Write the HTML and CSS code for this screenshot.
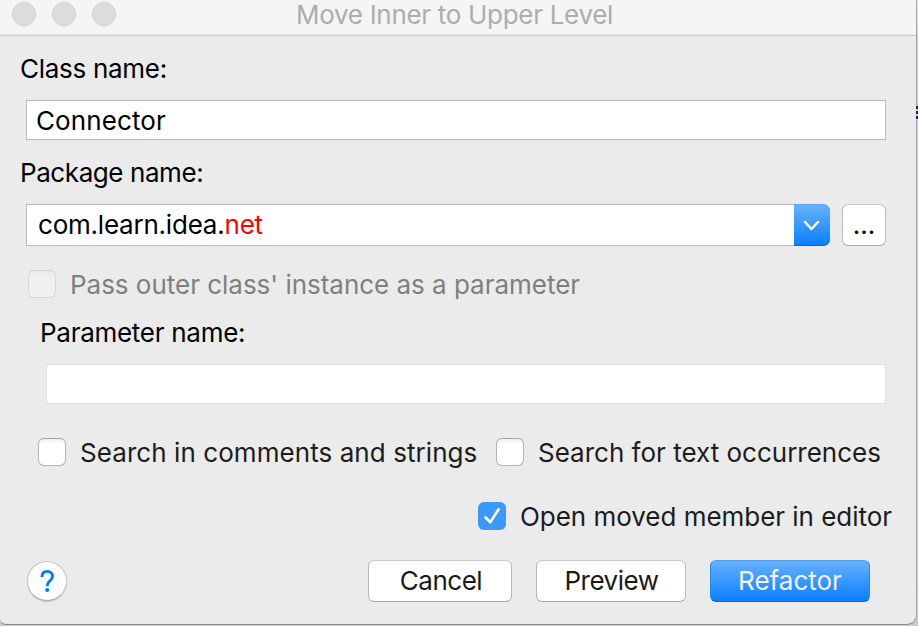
FILE: index.html
```html
<!DOCTYPE html>
<html lang="en">
<head>
<meta charset="utf-8">
<title>Move Inner to Upper Level</title>
<link rel="stylesheet" href="styles.css">
</head>
<body>
<div class="dialog">
  <header class="titlebar">
    <div class="lights"><i></i><i></i><i></i></div>
    <h1>Move Inner to Upper Level</h1>
  </header>
  <main class="form">
    <label class="label">Class name:</label>
    <div class="field">Connector</div>
    <label class="label label-package">Package name:</label>
    <div class="package-row">
      <div class="combo">
        <div class="combo-text">com.learn.idea.<span class="unresolved">net</span></div>
        <div class="combo-arrow"><svg width="36" height="42" viewBox="0 0 36 42"><path d="M11 18l6.500 7 6.500-7" fill="none" stroke="#fff" stroke-width="2.500" stroke-linecap="round" stroke-linejoin="round"/></svg></div>
      </div>
      <div class="button browse">...</div>
    </div>
    <div class="check-row pass-row"><i class="box disabled"></i><span>Pass outer class' instance as a parameter</span></div>
    <label class="label label-param">Parameter name:</label>
    <div class="field field-param"></div>
    <div class="search-row">
      <div class="check-row comments"><i class="box"></i><span>Search in comments and strings</span></div>
      <div class="check-row"><i class="box"></i><span>Search for text occurrences</span></div>
    </div>
    <div class="check-row open-row">
      <i class="box checked"><svg width="28" height="28" viewBox="0 0 28 28"><path d="M7.500 15.500l4.800 4.800L20.500 7.500" transform="translate(0 1)" fill="none" stroke="#2879d8" stroke-opacity=".5" stroke-width="3" stroke-linecap="round"/><path d="M7.500 15.500l4.800 4.800L20.500 7.500" fill="none" stroke="#fff" stroke-width="2.800" stroke-linecap="round" stroke-linejoin="round"/></svg></i>
      <span>Open moved member in editor</span>
    </div>
    <footer class="actions">
      <div class="help"><svg width="38" height="38" viewBox="0 0 38 38"><path d="M14 15C14 11.300 16.200 9.400 19.200 9.400c3.200 0 5.300 2 5.300 4.800 0 2.300-1.200 3.600-2.900 5-1.700 1.300-2.300 2.100-2.300 4.200v.8" fill="none" stroke="#007aff" stroke-width="2.900"/><circle cx="19.200" cy="28" r="2.100" fill="#007aff"/></svg></div>
      <div class="button cancel">Cancel</div>
      <div class="button preview">Preview</div>
      <div class="button primary">Refactor</div>
    </footer>
  </main>
</div>
<div class="backdrop"><i class="glyph"></i><i class="rule"></i><i class="rule rule-low"></i></div>
</body>
</html>
```
FILE: styles.css
```css
* { box-sizing: border-box; }
body {
  margin: 0;
  width: 918px;
  height: 626px;
  overflow: hidden;
  display: flex;
  background: #c9c9c9;
  color: #000;
  font: 26px/30px Inter, "Liberation Sans", sans-serif;
  white-space: nowrap;
}
i { display: block; }
.dialog {
  width: 917px;
  height: 625px;
  flex: none;
  background: #ebebeb;
  border-right: 1px solid #a6a6a6;
  border-bottom: 1px solid #8c8c8c;
  border-radius: 0 0 10px 6px;
}
.titlebar {
  position: relative;
  height: 36px;
  background: #f5f5f5;
  border-bottom: 1px solid #cbcbcb;
  box-shadow: inset 0 -1px #e9e9e9;
}
.lights { position: absolute; left: 12px; top: 2px; display: flex; gap: 16px; }
.lights i { width: 24px; height: 24px; border-radius: 50%; background: #dcdcdc; border: 1px solid #cecece; }
h1 { margin: 0; padding-left: 296px; font: inherit; letter-spacing: -.3px; color: #adadad; }
.form { padding: 17px 0 0 20px; }
.label { display: block; height: 32px; line-height: 32px; letter-spacing: -.28px; }
.field {
  width: 860px;
  height: 40px;
  margin: 15px 0 0 6px;
  padding-left: 9px;
  border: 1px solid #b9b9b9;
  background: #fff;
  line-height: 40px;
  letter-spacing: .1px;
}
.label-package { margin-top: 17px; letter-spacing: -.42px; }
.package-row { display: flex; gap: 12px; margin: 15px 0 0 6px; }
.combo { display: flex; width: 804px; height: 42px; }
.combo-text {
  flex: 1;
  border: 1px solid #b9b9b9;
  border-right: 0;
  background: #fff;
  padding-left: 11px;
  line-height: 40px;
  letter-spacing: -.22px;
}
.unresolved { color: #f00; }
.combo-arrow {
  width: 36px;
  background: linear-gradient(#6bb3fa, #087eff);
  border-radius: 0 7px 7px 0;
  box-shadow: inset 0 -1px #0069ef, inset 0 1px #5aa7f7;
}
.combo-arrow svg { display: block; }
.button {
  height: 42px;
  border: 1px solid #b8b8b8;
  border-top-color: #c8c8c8;
  border-bottom-color: #a9a9a9;
  border-radius: 6px;
  background: #fff;
  color: #1a1a1a;
  text-align: center;
  line-height: 40px;
}
.browse { width: 44px; color: #000; }
.check-row { display: flex; align-items: center; height: 32px; color: #1c1c1c; }
.check-row span { padding-top: 2px; }
.box {
  width: 28px;
  height: 28px;
  flex: none;
  margin-right: 14px;
  border: 1px solid #b4b4b4;
  border-top-color: #a5a5a5;
  border-radius: 6px;
  background: linear-gradient(#ededed, #fff 5px);
}
.box.disabled { border-color: #d6d6d6; border-top-color: #cfcfcf; background: linear-gradient(#e8e8e8, #f0f0f0 5px); }
.box.checked { border: 0; background: #3b99fc; }
.box svg { display: block; }
.pass-row { margin: 22px 0 0 8px; color: #7f7f7f; letter-spacing: -.02px; }
.label-param { margin: 17px 0 0 20px; }
.field-param { width: 840px; margin: 15px 0 0 26px; border-color: #dfdfdf; }
.search-row { display: flex; margin: 32px 0 0 18px; }
.comments { width: 458px; letter-spacing: .07px; }
.open-row { margin: 32px 0 0 458px; letter-spacing: -.03px; }
.actions { display: flex; margin: 28px 0 0 7px; }
.help {
  width: 40px;
  height: 40px;
  margin-top: 1px;
  border: 1px solid #c4c4c4;
  border-bottom-color: #aeaeae;
  border-radius: 50%;
  background: #fff;
  box-shadow: 0 1px 1px #0002;
}
.help svg { display: block; }
.cancel { width: 144px; margin-left: 301px; padding-left: 2px; letter-spacing: -.5px; }
.preview { width: 150px; margin-left: 24px; padding-left: 1px; letter-spacing: -.5px; }
.primary {
  width: 160px;
  margin-left: 24px;
  color: #f2f2f7;
  border-color: #4ea0f7 #2585f5 #0069ef;
  background: linear-gradient(#66b0fb, #0a7fff);
}
.backdrop { position: relative; flex: 1; background: linear-gradient(#ececec, #c9c9c9 50px, #c9c9c9); }
.glyph { position: absolute; top: 106px; left: -1px; width: 2px; height: 14px; background: repeating-linear-gradient(#4b0c60 0 3px, #c9c9c9 3px 5px); }
.rule { position: absolute; top: 540px; left: 0; width: 1px; height: 1px; background: #adadad; }
.rule-low { top: 584px; }
```
